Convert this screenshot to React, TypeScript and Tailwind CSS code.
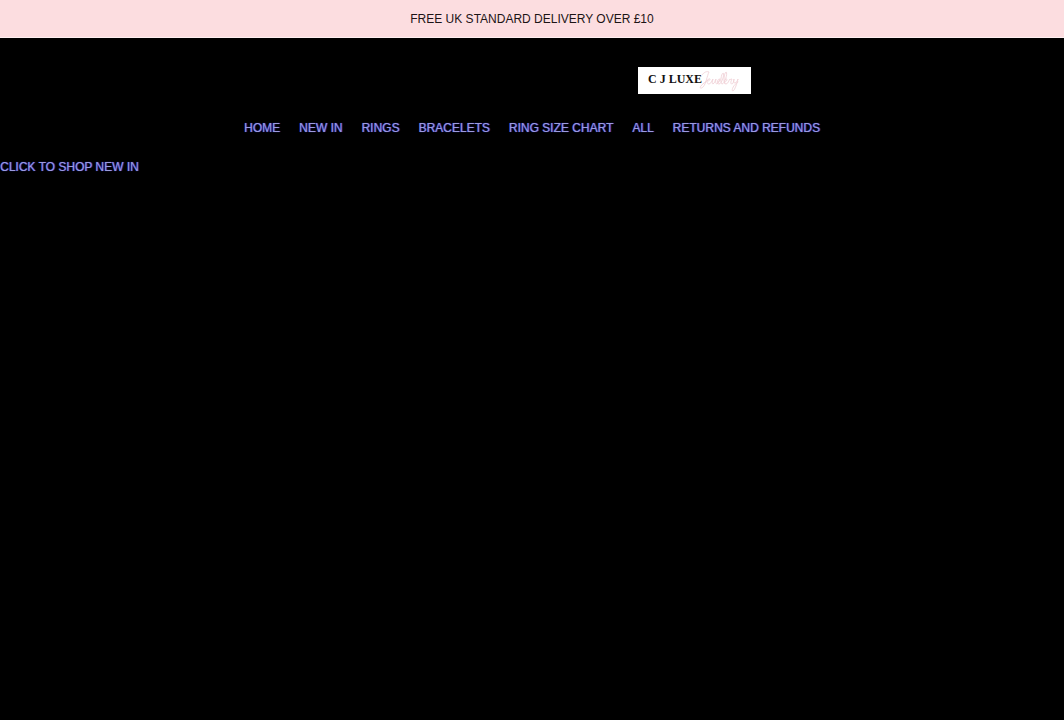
const links = [
  "HOME",
  "NEW IN",
  "RINGS",
  "BRACELETS",
  "RING SIZE CHART",
  "ALL",
  "RETURNS AND REFUNDS",
];

const linkStyle =
  "text-[#9c9cdc] [text-shadow:0_0_1px_#2c2cd8,1px_0_0_#2a2a90] hover:underline";

export default function App() {
  return (
    <div className="min-h-screen bg-black font-['Liberation_Sans',Arial,sans-serif] text-xs">
      <div className="border-b border-[#fff0f1] bg-[#fcdde0] px-4 pt-[11px] pb-[10px] text-center text-[#1c1416]">
        <p>FREE UK STANDARD DELIVERY OVER £10</p>
      </div>

      <header className="pt-[29px]">
        <a href="#" aria-label="CJ Luxe Jewellery" className="ml-[60%] block w-[113px]">
          <Logo />
        </a>
        <nav className="mt-[26px] flex flex-wrap justify-center gap-x-[19px] px-4">
          {links.map((link) => (
            <a key={link} href="#" className={linkStyle}>
              {link}
            </a>
          ))}
        </nav>
      </header>

      <main className="mt-[23px]">
        <a href="#" className={linkStyle}>
          CLICK TO SHOP NEW IN
        </a>
      </main>
    </div>
  );
}

function Logo() {
  return (
    <svg viewBox="0 0 113 27" className="block w-full bg-white" aria-hidden="true">
      <text
        x="10"
        y="16"
        fontSize="12"
        fontWeight="700"
        fill="#111"
        fontFamily="'Liberation Serif', 'Times New Roman', serif"
      >
        C J LUXE
      </text>
      {/* handwritten "Jewellery" flourish */}
      <g fill="none" stroke="#f1d3d8" strokeWidth="0.9" strokeLinecap="round" strokeLinejoin="round">
        <path d="M64 8c2-3 5-4 7-3-2 4-3 12-6 15-2 2-4 1-2-1 2-3 5-4 7-6" />
        <path d="M70 14c2 0 3-3 1-2-2 0-3 5 0 5 2 0 3-4 4-5-1 3-1 5 0 5 2-1 2-4 3-5-1 3 0 5 1 5 2-1 2-4 3-5" />
        <path d="M80 15c2 0 3-3 1-3-2 1-2 5 0 5 3 0 6-11 4-11-2 1-3 11-1 11 3 0 6-12 4-12-2 1-3 12-1 12" />
        <path d="M87 15c2-1 3-3 1-3s-2 5 0 5 3-4 4-5c0 1 1 0 2 0-1 2-2 5 0 5 1 0 2-3 2-5-1 3 0 4 1 4s3-3 3-4c-1 4-3 11-5 12-2 0 0-6 5-9" />
      </g>
    </svg>
  );
}
